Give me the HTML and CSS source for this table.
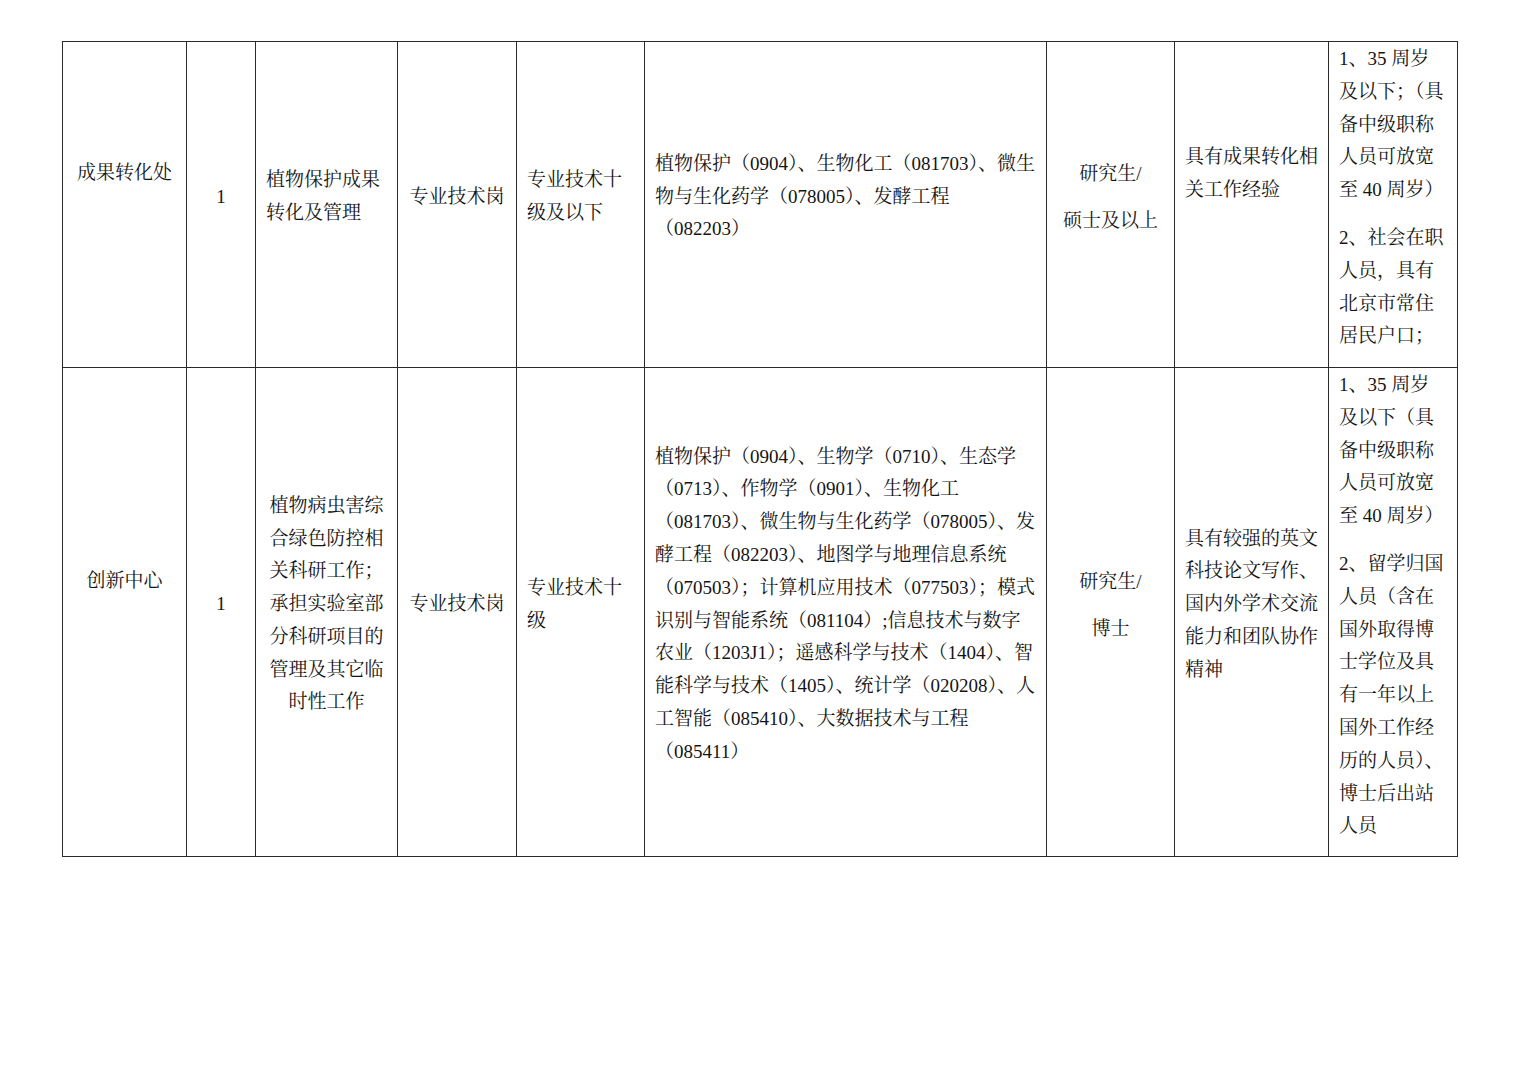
FILE: index.html
```html
<!DOCTYPE html>
<html lang="zh-CN">
<head>
<meta charset="utf-8">
<title>岗位表</title>
<link rel="stylesheet" href="styles.css">
</head>
<body>
<table class="jobs">
  <colgroup>
    <col class="w1"><col class="w2"><col class="w3"><col class="w4"><col class="w5"><col class="w6"><col class="w7"><col class="w8"><col class="w9">
  </colgroup>
  <tr class="r1">
    <td class="c ctr up">成果转化处</td>
    <td class="c ctr">1</td>
    <td class="c lft">植物保护成果<br>转化及管理</td>
    <td class="c ctr">专业技术岗</td>
    <td class="c lft">专业技术十<br>级及以下</td>
    <td class="c lft major">植物保护（0904）、生物化工（081703）、微生<br>物与生化药学（078005）、发酵工程<br>（082203）</td>
    <td class="c ctr wide">研究生/<br>硕士及以上</td>
    <td class="c lft up">具有成果转化相<br>关工作经验</td>
    <td class="c lft note"><p>1、35 周岁<br>及以下；（具<br>备中级职称<br>人员可放宽<br>至 40 周岁）</p><p>2、社会在职<br>人员，具有<br>北京市常住<br>居民户口；</p></td>
  </tr>
  <tr class="r2">
    <td class="c ctr up">创新中心</td>
    <td class="c ctr">1</td>
    <td class="c ctr">植物病虫害综<br>合绿色防控相<br>关科研工作；<br>承担实验室部<br>分科研项目的<br>管理及其它临<br>时性工作</td>
    <td class="c ctr">专业技术岗</td>
    <td class="c lft">专业技术十<br>级</td>
    <td class="c lft major">植物保护（0904）、生物学（0710）、生态学<br>（0713）、作物学（0901）、生物化工<br>（081703）、微生物与生化药学（078005）、发<br>酵工程（082203）、地图学与地理信息系统<br>（070503）；计算机应用技术（077503）；模式<br>识别与智能系统（081104）;信息技术与数字<br>农业（1203J1）；遥感科学与技术（1404）、智<br>能科学与技术（1405）、统计学（020208）、人<br>工智能（085410）、大数据技术与工程<br>（085411）</td>
    <td class="c ctr wide">研究生/<br>博士</td>
    <td class="c lft">具有较强的英文<br>科技论文写作、<br>国内外学术交流<br>能力和团队协作<br>精神</td>
    <td class="c lft note"><p>1、35 周岁<br>及以下（具<br>备中级职称<br>人员可放宽<br>至 40 周岁）</p><p>2、留学归国<br>人员（含在<br>国外取得博<br>士学位及具<br>有一年以上<br>国外工作经<br>历的人员）、<br>博士后出站<br>人员</p></td>
  </tr>
</table>
</body>
</html>
```
FILE: styles.css
```css
html, body {
  margin: 0;
  padding: 0;
  background: #ffffff;
}
body {
  font-family: "Liberation Serif", "Noto Serif CJK SC", "Noto Sans CJK SC", serif;
  color: #141414;
  font-size: 19px;
}
.jobs {
  margin: 41px 0 0 62px;
  border-collapse: collapse;
  table-layout: fixed;
  width: 1396px;
  border: 1px solid #2a2a2a;
}
.w1 { width: 124px; }
.w2 { width: 69px; }
.w3 { width: 142px; }
.w4 { width: 119px; }
.w5 { width: 128px; }
.w6 { width: 402px; }
.w7 { width: 128px; }
.w8 { width: 154px; }
.w9 { width: 129px; }
.r1 { height: 326px; }
.r2 { height: 489px; }
.c {
  border: 1px solid #2a2a2a;
  vertical-align: middle;
  line-height: 32.8px;
  padding: 0 6px 15px 10px;
  white-space: nowrap;
  overflow: hidden;
}
.ctr { text-align: center; padding-left: 4px; padding-right: 4px; }
.lft { text-align: left; }
.up { padding-bottom: 62px; }
.wide { line-height: 47px; }
.major { letter-spacing: 0; }
.note {
  vertical-align: top;
  padding-top: 1px;
  padding-bottom: 0;
}
.note p { margin: 0; }
.note p + p { margin-top: 15px; }
```
